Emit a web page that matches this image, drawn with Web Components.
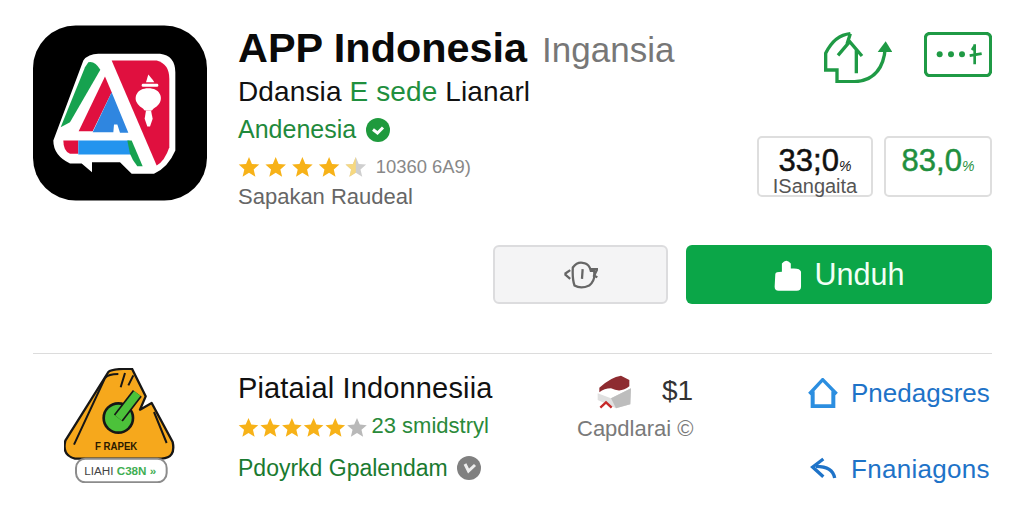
<!DOCTYPE html>
<html lang="id"><head><meta charset="utf-8"><title>APP Indonesia</title>
<style>html,body{margin:0;background:#fff;font-family:"Liberation Sans",Arial,sans-serif}</style></head>
<body>
<app-page>
  <app-header>
    <app-logo slot="logo"></app-logo>
    <h-line slot="info" size="41.4" lh="48" color="#0a0a0a" weight="700" top="0"><span>APP Indonesia</span><span style="font-size:35px;font-weight:400;color:#777;margin-left:15px">Ingansia</span></h-line>
    <h-line slot="info" size="28" lh="32" color="#111" top="2" style="letter-spacing:.12px">Ddansia <span style="color:#1f8f3e">E sede</span> Lianarl</h-line>
    <h-line slot="info" size="25" lh="30" color="#1f8a3c" top="6">Andenesia <check-badge style="margin-left:3px"></check-badge></h-line>
    <star-row slot="info" size="22" step="26.7" filled="4" part-star="1" top="10" gap="9"><span style="font-size:18.4px;color:#888">10360 6A9)</span></star-row>
    <h-line slot="info" size="22" lh="26" color="#666" top="4">Sapakan Raudeal</h-line>
    <top-icons slot="side"></top-icons>
    <stat-box slot="side" w="116" color="#111" value="33;0" label="ISangaita"></stat-box>
    <stat-box slot="side" w="108" color="#1f8f3e" value="83,0"></stat-box>
  </app-header>
  <action-row></action-row>
  <page-rule></page-rule>
  <app-listing>
    <badge-logo slot="logo"></badge-logo>
    <h-line slot="info" size="29" lh="34" color="#111" top="0" style="letter-spacing:.15px">Piataial Indonnesiia</h-line>
    <star-row slot="info" size="21" step="21.7" filled="5" part-star="0" top="9" gap="4"><span style="font-size:22px;color:#2a8a3a">23 smidstryl</span></star-row>
    <h-line slot="info" size="23" lh="28" color="#1a7a30" top="14">Pdoyrkd Gpalendam <clock-badge></clock-badge></h-line>
    <price-block slot="price"></price-block>
    <link-row slot="links" icon="home">Pnedagsres</link-row>
    <link-row slot="links" icon="back" style="margin-top:46px;letter-spacing:.3px">Fnaniagons</link-row>
  </app-listing>
</app-page>
<script>
const def=(n,html)=>customElements.define(n,class extends HTMLElement{constructor(){super();this.attachShadow({mode:'open'}).innerHTML=typeof html==='function'?html(this):html;}});
def('app-page',`<style>:host{display:block;width:959px;height:512px;padding-left:33px;box-sizing:content-box;overflow:hidden;font-family:"Liberation Sans",Arial,sans-serif}</style><slot></slot>`);
def('app-header',`<style>:host{display:grid;grid-template-columns:205px 1fr 235px;padding-top:24px;height:186px}
.side{display:flex;flex-wrap:wrap;justify-content:flex-end;align-content:flex-start;column-gap:11px}
::slotted([slot=logo]){margin-top:1px}</style>
<div><slot name="logo"></slot></div><div><slot name="info"></slot></div><div class="side"><slot name="side"></slot></div>`);
def('h-line',t=>`<style>:host{display:block;white-space:nowrap;font-size:${t.getAttribute('size')}px;line-height:${t.getAttribute('lh')}px;color:${t.getAttribute('color')};font-weight:${t.getAttribute('weight')||400};margin-top:${t.getAttribute('top')}px}</style><slot></slot>`);
def('app-logo',`<style>:host{display:block;width:174px;height:176px}svg{display:block}</style>
<svg width="174" height="176" viewBox="39 45 522 525"><rect x="39" y="45" width="522" height="525" rx="128" fill="#000"/>
<path d="M235 130H420Q465 135 466 185V420Q445 470 402 490H335L300 455H216V485L185 459H150Q100 435 100 390L190 150Q205 130 235 130Z" fill="#fff"/>
<path d="M205 155Q225 150 241 178L150 335L122 350L195 170Z" fill="#16a24f"/>
<path d="M275 150H410Q448 160 448 205V410Q435 450 410 465Z" fill="#e0103f"/>
<path d="M255 198L275 245L218 362H176Z" fill="#e0103f"/>
<path d="M275 245L325 367H300L292 342H282L280 365H218Z" fill="#2f86e0"/>
<path d="M130 390H175V430H150Q130 422 130 390Z" fill="#e0103f"/>
<path d="M175 390H328L345 432H175Z" fill="#2394ee"/>
<path d="M322 390H335L368 467H352Q338 452 330 430Z" fill="#16a24f"/>
<g fill="#fff"><path d="M378 215L385 192L398 208L403 215Z"/><rect x="365" y="220" width="50" height="9" rx="4"/><path d="M385 233C420 233 428 260 420 275C412 290 400 292 396 300H374C370 292 358 290 350 275C342 260 350 233 385 233Z"/><path d="M378 300H393L398 325L390 348H382L374 325Z"/></g>
</svg>`);
def('check-badge',`<style>:host{display:inline-block;width:24px;height:24px;vertical-align:-4px}svg{display:block}</style><svg width="24" height="24" viewBox="0 0 24 24"><circle cx="12" cy="12" r="12" fill="#1f9a3d"/><path d="M7 11.5L11.5 15L17 9.5" fill="none" stroke="#fff" stroke-width="3"/></svg>`);
def('clock-badge',`<style>:host{display:inline-block;width:24px;height:24px;vertical-align:-4px;margin-left:3px}svg{display:block}</style><svg width="24" height="24" viewBox="0 0 24 24"><circle cx="12" cy="12" r="12" fill="#808080"/><path d="M8 8L11.5 15L18 9" fill="none" stroke="#eee" stroke-width="3"/></svg>`);
const STAR="M12 1L15.2 8.6L23.2 9.3L17.1 14.6L19 22.6L12 18.3L5 22.6L6.9 14.6L.8 9.3L8.8 8.6Z";
def('star-row',t=>{const s=+t.getAttribute('size'),st=+t.getAttribute('step'),f=+t.getAttribute('filled'),p=t.getAttribute('part-star')==='1';let h='';const W=st*(f+1);
 for(let i=0;i<f+1;i++){const dy=i<f;const x=i*st;
  h+=`<svg x="${x}" width="${s}" height="${s}" viewBox="0 0 24 24">`+(dy?`<path d="${STAR}" fill="#f7b218"/>`:(p?`<path d="${STAR}" fill="#cfcfcf"/><path d="M12 1V18.3L5 22.6L6.9 14.6L.8 9.3L8.8 8.6Z" fill="#f9d877" opacity=".9"/>`:`<path d="${STAR}" fill="#b9b9b9"/>`))+`</svg>`;}
 return `<style>:host{display:flex;align-items:center;height:26px;margin-top:${t.getAttribute('top')}px;white-space:nowrap}svg{display:block;overflow:visible}.t{margin-left:${t.getAttribute('gap')}px;line-height:26px}</style><svg width="${W-st+s}" height="${s}">${h}</svg><div class="t"><slot></slot></div>`});
def('top-icons',`<style>:host{display:flex;justify-content:flex-end;gap:32px;width:100%;height:112px;padding-top:8px;box-sizing:border-box}svg{display:block}</style>
<svg width="69" height="51" viewBox="250 36 207 153" fill="none" stroke="#1f9a45" stroke-width="10"><path d="M332 41Q285 45 258 100V150H292V185H345Q430 180 437 82"/><path d="M295 106L330 65L367 108M350 90V160M332 41L322 72"/><path d="M414 96L438 64L458 96Z" fill="#1f9a45" stroke="none"/></svg>
<svg width="68" height="45" viewBox="551 38 204 135" fill="none" stroke="#1f9a45" stroke-width="10"><rect x="555" y="42" width="196" height="127" rx="15"/><g fill="#1f9a45" stroke="none"><circle cx="598" cy="105" r="9"/><circle cx="632" cy="105" r="9"/><circle cx="665" cy="105" r="9"/></g><path d="M703 75V135M688 109L724 103M695 92L704 78" stroke-width="8"/></svg>`);
def('stat-box',t=>`<style>:host{display:block;box-sizing:border-box;width:${t.getAttribute('w')}px;height:61px;border:2px solid #dedede;border-radius:5px;text-align:center;background:#fff}
.v{font-size:31px;line-height:34px;margin-top:6px;color:${t.getAttribute('color')};-webkit-text-stroke:.5px ${t.getAttribute('color')}}.v small{font-size:14px;font-style:italic;-webkit-text-stroke:0}.l{font-size:20px;line-height:20px;color:#555;margin-top:-7px;white-space:nowrap}.l:empty{display:none}</style>
<div class="v">${t.getAttribute('value')}<small>%</small></div><div class="l">${t.getAttribute('label')||''}</div>`);
def('action-row',`<style>:host{display:flex;justify-content:flex-end;gap:18px;margin-top:35px;height:59px}
.a,.b{box-sizing:border-box;height:59px;border-radius:6px;display:flex;align-items:center;justify-content:center}
.a{width:175px;background:#f4f4f5;border:2px solid #dcdcde}.b{width:306px;background:#0ba648;color:#f2fff6;font-size:30.5px;gap:13px}svg{display:block}</style>
<div class="a"><svg width="34" height="30" viewBox="243 73 104 90" fill="none" stroke="#666" stroke-width="7"><path d="M270 95Q285 75 305 82Q320 85 325 105H335Q340 135 320 150Q295 162 275 150Q268 130 270 95Z"/><path d="M300 100L298 130M245 115L262 103M245 115L262 130M325 100H345L335 120L345 125"/></svg></div>
<div class="b"><svg width="28" height="32" viewBox="873 66 81 97"><path d="M875 112Q875 105 895 105V80Q908 62 922 80V95Q950 92 953 105V150Q953 162 940 162H885Q873 162 873 150Z" fill="#fff"/></svg><span>Unduh</span></div>`);
def('page-rule',`<style>:host{display:block;height:1px;background:#dcdcdc;margin-top:49px}</style>`);
def('app-listing',`<style>:host{display:grid;grid-template-columns:205px 339px 231px 1fr;height:158px}
.l{padding:14px 0 0 31px}.i{padding-top:17px}.p{padding-top:21px}.k{padding-top:24px}</style>
<div class="l"><slot name="logo"></slot></div><div class="i"><slot name="info"></slot></div><div class="p"><slot name="price"></slot></div><div class="k"><slot name="links"></slot></div>`);
def('badge-logo',`<style>:host{display:block;width:111px;height:115px}svg{display:block}</style>
<svg width="111" height="115" viewBox="42 40 333 345">
<path d="M175 52Q185 42 246 42L287 125L270 165L305 145L368 262Q378 310 335 312H75Q35 302 46 258Z" fill="#f6a81c" stroke="#161616" stroke-width="7" stroke-linejoin="round"/>
<path d="M72 270L165 70Q175 58 205 58M312 172L350 265" fill="none" stroke="#161616" stroke-width="6"/>
<path d="M225 55L212 98M250 62L235 92" stroke="#161616" stroke-width="6"/>
<circle cx="205" cy="190" r="48" fill="#161616"/><circle cx="205" cy="190" r="40" fill="#4cc23a"/>
<path d="M205 190L262 116" stroke="#161616" stroke-width="34"/><path d="M205 190L262 116" stroke="#4cc23a" stroke-width="24"/>
<text x="135" y="286" font-family="Liberation Sans" font-size="31" font-weight="700" fill="#2a1a00" textLength="127" lengthAdjust="spacingAndGlyphs">F RAPEK</text>
<rect x="78" y="312" width="272" height="71" rx="28" fill="#fff" stroke="#8c8c8c" stroke-width="6"/>
<text x="103" y="361" font-family="Liberation Sans" font-size="35" fill="#444">LIAHI <tspan font-weight="700" fill="#3fae52">C38N »</tspan></text>
</svg>`);
def('price-block',`<style>:host{display:block;white-space:nowrap}.r{display:flex;align-items:flex-start;padding-left:20px;height:36px}.d{font-size:28px;line-height:32px;color:#333;margin-left:31px}
.c{font-size:22px;line-height:26px;color:#7a7a7a;margin-top:5px}svg{display:block}.s{margin-left:6px}</style>
<div class="r"><svg width="34" height="34" viewBox="108 30 102 102"><path d="M110 85L150 100L210 70L208 118L165 130L110 105Z" fill="#e0e0e0"/><path d="M150 100L210 70L208 118L165 130Z" fill="#bdbdbd"/><path d="M115 68Q150 36 180 32L205 45V64Q180 85 150 70Q130 70 115 82Z" fill="#8e2b30"/><path d="M118 128L135 112L152 128" fill="none" stroke="#c62828" stroke-width="7"/></svg><div class="d">$1</div></div>
<div class="c">Capdlarai<span class="s">©</span></div>`);
def('link-row',t=>{const home=t.getAttribute('icon')==='home';const ic=home?`<path d="M750 88L790 45L832 88"/><path d="M760 80V125H822V80" stroke-width="12"/>`:`<g transform="translate(0,-228)"><path d="M826 340Q820 305 770 305"/><path d="M792 283L760 307L792 336"/></g>`;
return `<style>:host{display:flex;align-items:center;height:30px;font-size:26px;line-height:30px;color:#1e73c8;white-space:nowrap}svg{display:block;flex:none;margin-right:13px}</style><svg width="30" height="30" viewBox="746 40 90 90" fill="none" stroke="${home?'#2b8ee0':'#1e73c8'}" stroke-width="10">${ic}</svg><slot></slot>`});
</script>
</body></html>
